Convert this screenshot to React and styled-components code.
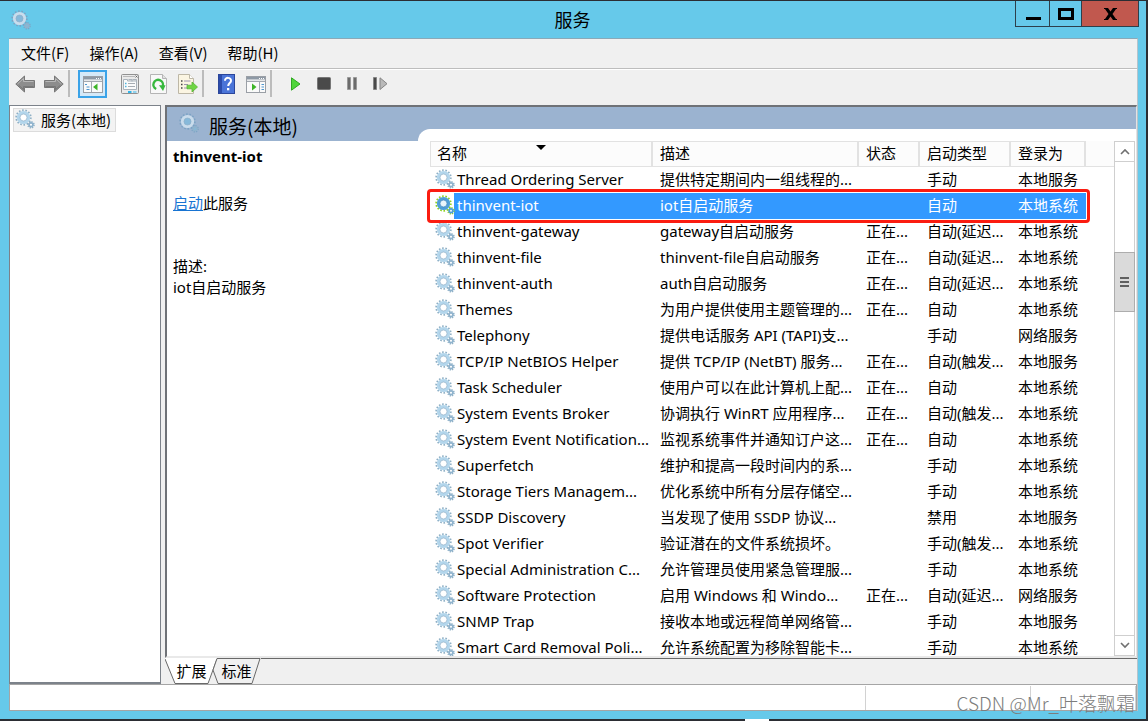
import React from "react";
import styled, { createGlobalStyle } from "styled-components";

function App() {
  // data
  const menus = ["文件(F)", "操作(A)", "查看(V)", "帮助(H)"];

  const columns = [
    { label: "名称", width: 223, sorted: true },
    { label: "描述", width: 206 },
    { label: "状态", width: 61 },
    { label: "启动类型", width: 91 },
    { label: "登录为", width: 75 },
  ];

  const services = [
    ["Thread Ordering Server", "提供特定期间内一组线程的...", "", "手动", "本地服务"],
    ["thinvent-iot", "iot自启动服务", "", "自动", "本地系统"],
    ["thinvent-gateway", "gateway自启动服务", "正在...", "自动(延迟...", "本地系统"],
    ["thinvent-file", "thinvent-file自启动服务", "正在...", "自动(延迟...", "本地系统"],
    ["thinvent-auth", "auth自启动服务", "正在...", "自动(延迟...", "本地系统"],
    ["Themes", "为用户提供使用主题管理的...", "正在...", "自动", "本地系统"],
    ["Telephony", "提供电话服务 API (TAPI)支...", "", "手动", "网络服务"],
    ["TCP/IP NetBIOS Helper", "提供 TCP/IP (NetBT) 服务...", "正在...", "自动(触发...", "本地服务"],
    ["Task Scheduler", "使用户可以在此计算机上配...", "正在...", "自动", "本地系统"],
    ["System Events Broker", "协调执行 WinRT 应用程序...", "正在...", "自动(触发...", "本地系统"],
    ["System Event Notification...", "监视系统事件并通知订户这...", "正在...", "自动", "本地系统"],
    ["Superfetch", "维护和提高一段时间内的系...", "", "手动", "本地系统"],
    ["Storage Tiers Managem...", "优化系统中所有分层存储空...", "", "手动", "本地系统"],
    ["SSDP Discovery", "当发现了使用 SSDP 协议...", "", "禁用", "本地服务"],
    ["Spot Verifier", "验证潜在的文件系统损坏。", "", "手动(触发...", "本地系统"],
    ["Special Administration C...", "允许管理员使用紧急管理服...", "", "手动", "本地系统"],
    ["Software Protection", "启用 Windows 和 Windo...", "正在...", "自动(延迟...", "网络服务"],
    ["SNMP Trap", "接收本地或远程简单网络管...", "", "手动", "本地服务"],
    ["Smart Card Removal Poli...", "允许系统配置为移除智能卡...", "", "手动", "本地系统"],
  ];
  const selectedName = "thinvent-iot";

  // render items
  const menusJSX = menus.map((menu) => <MenuButton key={menu}>{menu}</MenuButton>);

  const headersJSX = columns.map((column) => (
    <HeaderCell key={column.label} scope="col">
      {column.label}
      {column.sorted && (
        <SortArrow viewBox="0 0 10 5" aria-hidden="true">
          <path d="M0 0h10L5 5z" />
        </SortArrow>
      )}
    </HeaderCell>
  ));

  const servicesJSX = services.map(([name, description, status, startup, logon]) => {
    const selected = name === selectedName;
    return (
      <ServiceRow key={name} $selected={selected}>
        <NameCell $selected={selected}>
          <NameContent>
            <GearIcon active={selected} />
            <span>{name}</span>
          </NameContent>
          {selected && <Highlight />}
        </NameCell>
        <Cell>{description}</Cell>
        <Cell>{status}</Cell>
        <Cell>{startup}</Cell>
        <Cell>{logon}</Cell>
      </ServiceRow>
    );
  });

  return (
    <Desktop>
      <GlobalStyle />
      <Window>
        <TitleBar>
          <GearIcon pale />
          <Title>服务</Title>
          <WindowControls>
            <WindowButton aria-label="最小化" $width={33}>
              <svg width="16" height="16" viewBox="0 0 16 16">
                <path d="M1 11h15v3H1z" />
              </svg>
            </WindowButton>
            <WindowButton aria-label="最大化" $width={32}>
              <svg width="16" height="12" viewBox="0 0 16 12">
                <path d="M0 0h16v12H0zM3 3v6h10V3z" fillRule="evenodd" />
              </svg>
            </WindowButton>
            <WindowButton aria-label="关闭" $width={57} $close>
              <svg width="13" height="12" viewBox="0 0 13 12">
                <path d="M0 0h4l2.5 3.5L9 0h4v1h-1L8.5 6l3.5 5h1v1H9L6.5 8.5 4 12H0v-1h1l3.5-5L1 1H0z" />
              </svg>
            </WindowButton>
          </WindowControls>
        </TitleBar>
        <Client>
          <MenuBar>{menusJSX}</MenuBar>
          <ToolBar>
            <ToolButton aria-label="后退">
              <ArrowIcon />
            </ToolButton>
            <ToolButton aria-label="前进">
              <ArrowIcon flip />
            </ToolButton>
            <Separator />
            <ToolButton aria-label="显示/隐藏控制台树" $active>
              <PanelIcon />
            </ToolButton>
            <ToolButton aria-label="属性">
              <PropertiesIcon />
            </ToolButton>
            <ToolButton aria-label="刷新">
              <RefreshIcon />
            </ToolButton>
            <ToolButton aria-label="导出列表">
              <ExportIcon />
            </ToolButton>
            <Separator />
            <ToolButton aria-label="帮助">
              <HelpIcon />
            </ToolButton>
            <ToolButton aria-label="显示/隐藏操作窗格">
              <PanelIcon right />
            </ToolButton>
            <Separator $wide />
            <ToolButton aria-label="启动服务" $narrow>
              <svg width="10" height="14" viewBox="0 0 10 14">
                <path d="M.5.8v12.4L9 7z" fill="#4fd53a" stroke="#2fa822" />
              </svg>
            </ToolButton>
            <ToolButton aria-label="停止服务" $narrow>
              <svg width="14" height="14" viewBox="0 0 14 14">
                <rect x=".5" y=".5" width="13" height="12" rx="1" fill="#4a4a4a" stroke="#777" />
              </svg>
            </ToolButton>
            <ToolButton aria-label="暂停服务" $narrow>
              <svg width="12" height="14" viewBox="0 0 12 14">
                <path d="M1.5.5h3v12h-3zM7.500.5h3v12h-3z" fill="#6b6b6b" stroke="#999" />
              </svg>
            </ToolButton>
            <ToolButton aria-label="重新启动服务" $narrow>
              <svg width="16" height="14" viewBox="0 0 16 14">
                <path d="M1.5.5h3v12h-3z" fill="#4a4a4a" stroke="#858585" />
                <path d="M8 .8v11.700L15 6.700z" fill="#b9b9b9" stroke="#858585" />
              </svg>
            </ToolButton>
          </ToolBar>
          <Panes>
            <TreePane>
              <TreeItem>
                <GearIcon />
                服务(本地)
              </TreeItem>
            </TreePane>
            <ContentPane>
              <ContentBody>
                <Details>
                  <Banner>
                    <GearIcon pale />
                    服务(本地)
                  </Banner>
                  <ServiceName>thinvent-iot</ServiceName>
                  <DetailLine>
                    <StartLink href="#start">启动</StartLink>此服务
                  </DetailLine>
                  <Description>
                    描述:
                    <br />
                    iot自启动服务
                  </Description>
                </Details>
                <ListSide>
                  <ListSurface>
                    <TableArea>
                      <ServiceTable>
                        <colgroup>
                          {columns.map((column) => (
                            <Column key={column.label} $width={column.width} />
                          ))}
                        </colgroup>
                        <thead>
                          <tr>{headersJSX}</tr>
                        </thead>
                        <tbody>{servicesJSX}</tbody>
                      </ServiceTable>
                      <HeaderRest />
                    </TableArea>
                    <ScrollBar>
                      <ScrollButton aria-label="向上滚动">
                        <Chevron />
                      </ScrollButton>
                      <ScrollTrack $grow={90} />
                      <ScrollThumb>
                        <svg width="9" height="10" viewBox="0 0 9 10" aria-hidden="true">
                          <path d="M0 0h9v2H0zM0 4h9v2H0zM0 8h9v2H0z" fill="#606060" />
                        </svg>
                      </ScrollThumb>
                      <ScrollTrack $grow={323} />
                      <ScrollButton aria-label="向下滚动">
                        <Chevron down />
                      </ScrollButton>
                    </ScrollBar>
                  </ListSurface>
                </ListSide>
              </ContentBody>
              <Tabs>
                <Tab $width={53}>
                  <TabShape viewBox="0 0 53 26" aria-hidden="true">
                    <path d="M0 0l10 25h33L53 0z" fill="#fff" />
                    <path d="M0 1l10 24.500h33L52 1" fill="none" stroke="#696969" />
                  </TabShape>
                  <TabLabel>扩展</TabLabel>
                </Tab>
                <Tab $width={49} $overlap>
                  <TabShape viewBox="0 0 49 26" aria-hidden="true">
                    <path d="M5 .5L1 12l5 13.500h34L48 .5z" fill="#f0f0f0" stroke="#696969" />
                  </TabShape>
                  <TabLabel>标准</TabLabel>
                </Tab>
                <TabRest />
              </Tabs>
            </ContentPane>
          </Panes>
          <StatusBar>
            <StatusCell $grow />
            <StatusCell $width={165} />
            <StatusCell $width={105} />
          </StatusBar>
        </Client>
        <Watermark>CSDN @Mr_叶落飘霜</Watermark>
      </Window>
      <DesktopEdge />
    </Desktop>
  );
}

export default App;

// icons
function GearIcon({ active, pale }) {
  const teeth = active ? "#8ed321" : pale ? "#7ba3c4" : "#8fb0c6";
  const body = active ? "#4f9fd8" : pale ? "#c9dcec" : "#b3d6ec";
  const edge = active ? "#3c83bd" : "#8fb0c8";
  const hole = active ? "#eaf5fb" : pale ? "#86b9da" : "#fff";
  return (
    <svg width="20" height="20" viewBox="0 0 20 20" aria-hidden="true">
      <circle cx="8.5" cy="8.500" r="7.300" fill="none" stroke={teeth} strokeWidth="1.800" strokeDasharray="1.600 1.676" />
      <circle cx="8.5" cy="8.500" r="5.100" fill={hole} stroke={body} strokeWidth="3" />
      <circle cx="8.5" cy="8.500" r="3.500" fill="none" stroke={edge} strokeWidth=".7" />
      <circle cx="16" cy="15.800" r="3" fill="none" stroke={teeth} strokeWidth="1.600" strokeDasharray="1.200 1.156" />
      <circle cx="16" cy="15.800" r="1.900" fill={hole} stroke={active ? "#4f9fd8" : "#8fb3cd"} strokeWidth="1.700" />
    </svg>
  );
}

function ArrowIcon({ flip }) {
  return (
    <svg width="20" height="18" viewBox="0 0 20 18" aria-hidden="true">
      <g transform={flip ? "translate(20 0) scale(-1 1)" : undefined}>
        <path d="M.8 9L9.500 1v4.500h10v7h-10V17z" fill="#8d8d8d" stroke="#777" strokeLinejoin="round" />
        <path d="M2.500 9l6-5.500v3h10" fill="none" stroke="#b8b8b8" />
        <path d="M4 10.500l4.500 4v-3h10" fill="none" stroke="#777" />
      </g>
    </svg>
  );
}

function PanelIcon({ right }) {
  return (
    <svg width="20" height="18" viewBox="0 0 20 18" aria-hidden="true">
      <rect x=".5" y="1.500" width="19" height="16" fill="#fafafa" stroke="#9a9fa6" />
      <path d="M1 2h18v2.500H1z" fill="#8e99a5" />
      <path d="M13 3h1v1h-1zM15 3h1v1h-1zM17 3h1v1h-1z" fill="#fff" />
      <path d="M1 5.500h18" stroke="#e6e8ea" />
      <path d="M1 6.500h18" stroke="#a3a9b1" />
      {right ? (
        <g>
          <path d="M13.500 7v10" stroke="#a3a9b1" />
          <path d="M15.500 9.500h2.500M15.500 12h2.500M15.500 14.500h2.500" stroke="#4f97d0" />
          <path d="M6 8.500v7l4.500-3.500z" fill="#3db528" />
        </g>
      ) : (
        <g>
          <path d="M8.500 7v10" stroke="#a3a9b1" />
          <path d="M2 9.500h2M3.500 12h3M3.500 14.500h3" stroke="#4f97d0" />
          <path d="M14.500 8.500v7L10 12z" fill="#3db528" />
        </g>
      )}
    </svg>
  );
}

function PropertiesIcon() {
  return (
    <svg width="20" height="20" viewBox="0 0 20 20" aria-hidden="true">
      <rect x="1.500" y=".5" width="17" height="19" rx="1" fill="#eaeaea" stroke="#919191" />
      <path d="M3 2.500h12" stroke="#b9b9b9" />
      <path d="M15.500 1.500l2 2m0-2l-2 2" stroke="#555" strokeWidth=".8" />
      <path d="M3.500 5.500h4v1.500h9V15.500h-13z" fill="#fbfbfb" stroke="#aab3bb" />
      <path d="M8.500 5.500h3.500v2M12.500 5.500h4v2" fill="none" stroke="#aab3bb" />
      <path d="M5 9.500h1.500M5 12.500h1.500" stroke="#4fb4de" strokeWidth="1.500" />
      <path d="M8 9.500h7M8 12.500h7" stroke="#a7adb3" />
      <path d="M8 17h3.500v2H8z" fill="#2fb5ea" />
      <path d="M13 17h3.500v2H13z" fill="#8fd2ee" />
    </svg>
  );
}

function RefreshIcon() {
  return (
    <svg width="17" height="20" viewBox="0 0 17 20" aria-hidden="true">
      <path d="M.5.5h12l4 4v15H.5z" fill="#f8f8f8" stroke="#b4b4b4" />
      <path d="M12.500.5v4h4" fill="#e2e2e2" stroke="#b4b4b4" />
      <path d="M6.200 15A4.800 4.800 0 1 1 12.800 12" fill="none" stroke="#37b83d" strokeWidth="2.400" />
      <path d="M9 11.200h6.500L13 17z" fill="#37b83d" />
    </svg>
  );
}

function ExportIcon() {
  return (
    <svg width="20" height="20" viewBox="0 0 20 20" aria-hidden="true">
      <path d="M.5.5h11l4 4v15H.5z" fill="#fbf5e2" stroke="#bdb7a6" />
      <path d="M11.500.5v4h4" fill="#fff" stroke="#bdb7a6" />
      <path d="M3 7h1.500M3 10.500h1.500M3 14h1.500" stroke="#444" strokeWidth="1.400" />
      <path d="M6 7h6.500M6 10.500h4M6 14h4" stroke="#9d93ad" />
      <path d="M9 11.200h5V8l5.500 5-5.500 5v-3.200H9z" fill="#6fd543" stroke="#56b535" strokeWidth=".8" />
    </svg>
  );
}

function HelpIcon() {
  return (
    <svg width="17" height="20" viewBox="0 0 17 20" aria-hidden="true">
      <rect x=".5" y=".5" width="16" height="19" fill="#4a74d8" stroke="#2b469b" />
      <path d="M1 1h3v18H1z" fill="#2c4cab" />
      <path d="M7 6.800c0-4 6.300-3.800 6 0-.2 2.200-2.800 2.400-2.800 5.200" fill="none" stroke="#fff" strokeWidth="2" />
      <rect x="9" y="14" width="2.300" height="2.300" fill="#fff" />
    </svg>
  );
}

function Chevron({ down }) {
  return (
    <svg width="10" height="7" viewBox="0 0 10 7" aria-hidden="true">
      <path d={down ? "M1 1l4 4 4-4" : "M1 6l4-4 4 4"} fill="none" stroke="#707070" strokeWidth="1.600" />
    </svg>
  );
}

// styles
const GlobalStyle = createGlobalStyle`
  * {
    box-sizing: border-box;
  }
  body {
    margin: 0;
    color: #000;
    font-family: "Noto Sans", "Noto Sans CJK SC", sans-serif;
    font-size: 15px;
    line-height: 21px;
  }
  button {
    padding: 0;
    border: 0;
    background: none;
    color: inherit;
    font: inherit;
  }
  svg {
    flex: none;
  }
`;

const Desktop = styled.div`
  display: flex;
  flex-direction: column;
  height: 100vh;
  padding: 1px 2px 0 0;
  background: #2b2d33;
`;
const DesktopEdge = styled.div`
  width: 24px;
  height: 2px;
  margin-left: 65%;
  background: #fff;
`;

const Window = styled.div`
  position: relative;
  display: flex;
  flex: 1;
  flex-direction: column;
  min-height: 0;
  padding: 0 8px 8px 9px;
  background: #66c9ea;
`;

const TitleBar = styled.header`
  position: relative;
  display: flex;
  align-items: center;
  height: 37px;
  padding-left: 2px;
`;
const Title = styled.h1`
  flex: 1;
  margin: 0;
  padding-right: 24px;
  font-family: "Noto Sans CJK SC", sans-serif;
  font-size: 18px;
  font-weight: 400;
  text-align: center;
`;
const WindowControls = styled.div`
  position: absolute;
  top: 0;
  right: -1px;
  display: flex;
  border: 1px solid #2d3f4b;
  border-top: 0;
`;
const WindowButton = styled.button`
  display: flex;
  align-items: center;
  justify-content: center;
  width: ${(props) => props.$width}px;
  height: 25px;
  background: ${(props) => (props.$close ? "#c1584e" : "transparent")};

  & + & {
    border-left: 1px solid #2d3f4b;
  }
`;

const Client = styled.div`
  display: flex;
  flex: 1;
  flex-direction: column;
  min-height: 0;
  border-top: 1px solid #8aa9b8;
  border-right: 1px solid #b5c4cc;
  background: #f0f0f0;
`;
const MenuBar = styled.nav`
  display: flex;
  flex: none;
  height: 30px;
  padding: 0 2px 2px;
  border-bottom: 1px solid #bdbdbd;
  font-family: "Noto Sans CJK SC", sans-serif;
`;
const MenuButton = styled.button`
  padding: 0 10px;
`;

const ToolBar = styled.div`
  display: flex;
  flex: none;
  align-items: center;
  height: 36px;
  padding: 0 1px 8px;
  border-top: 1px solid #fff;
`;
const ToolButton = styled.button`
  display: flex;
  align-items: center;
  justify-content: center;
  width: ${(props) => (props.$narrow ? 28 : 29)}px;
  height: 28px;
  margin-right: ${(props) => (props.$active ? 8 : 0)}px;
  border: ${(props) => (props.$active ? "2px solid #3ba3e8" : "0")};
  background: ${(props) => (props.$active ? "#d5e9f8" : "none")};
`;
const Separator = styled.div`
  width: 2px;
  height: 27px;
  margin-right: ${(props) => (props.$wide ? 10 : 8)}px;
  background: #bcbcbc;
`;

const Panes = styled.div`
  display: flex;
  flex: 1;
  gap: 4px;
  min-height: 0;
`;
const TreePane = styled.aside`
  width: 152px;
  padding: 2px 3px;
  border: 1px solid #7c828a;
  border-bottom-width: 2px;
  background: #fff;
`;
const TreeItem = styled.button`
  display: flex;
  align-items: center;
  gap: 6px;
  height: 24px;
  padding: 0 4px 2px 1px;
  border: 1px solid #dcdcdc;
  background: #f3f3f3;
  font-family: "Noto Sans CJK SC", sans-serif;
  white-space: nowrap;
`;

const ContentPane = styled.main`
  display: flex;
  flex: 1;
  flex-direction: column;
  min-width: 0;
`;
const ContentBody = styled.div`
  display: flex;
  flex: 1;
  min-height: 0;
  border: 2px solid #6f7277;
  border-right: 1px solid #e3e3e3;
  border-bottom: 2px solid #e9e9e9;
  background: #fff;
`;
const Details = styled.section`
  width: 251px;
`;
const Banner = styled.h2`
  display: flex;
  align-items: center;
  gap: 10px;
  height: 34px;
  margin: 0;
  padding: 2px 12px 0;
  background: #9bb3d0;
  font-family: "Noto Sans CJK SC", sans-serif;
  font-size: 19px;
  font-weight: 400;

  svg {
    margin-bottom: 4px;
  }
`;
const ServiceName = styled.h3`
  margin: 5px 6px 26px;
  font-size: 15px;
  font-weight: 700;
`;
const DetailLine = styled.p`
  margin: 0 6px 42px;
`;
const Description = styled.p`
  margin: 0 6px;
`;
const StartLink = styled.a`
  color: #1874d2;
`;

const ListSide = styled.section`
  display: flex;
  flex: 1;
  min-width: 0;
  padding-top: 22px;
  background: linear-gradient(#9bb3d0 34px, #fff 34px);
`;
const ListSurface = styled.div`
  display: flex;
  flex: 1;
  min-width: 0;
  padding: 12px 1px 0 0;
  overflow: hidden;
  border-top-left-radius: 12px;
  background: #fff;
`;
const TableArea = styled.div`
  display: flex;
  flex: 1;
  align-items: flex-start;
  min-width: 0;
  padding-left: 12px;
  overflow: hidden;
`;
const ServiceTable = styled.table`
  flex: none;
  width: 656px;
  border-spacing: 0;
  table-layout: fixed;
`;
const Column = styled.col`
  width: ${(props) => props.$width}px;
`;
const HeaderCell = styled.th`
  position: relative;
  height: 26px;
  padding: 0 7px 2px;
  border: 1px solid #e2e2e2;
  border-width: 1px 2px 1px 0;
  background: #fcfcfc;
  font-weight: 400;
  text-align: left;
  white-space: nowrap;

  &:first-child {
    padding-left: 6px;
    border-left-width: 1px;
  }
`;
const SortArrow = styled.svg`
  position: absolute;
  top: 3px;
  left: calc(50% - 5px);
  width: 10px;
  height: 5px;
`;
const HeaderRest = styled.div`
  flex: 1;
  height: 26px;
  border-bottom: 1px solid #e2e2e2;
  background: #fcfcfc;
`;
const ServiceRow = styled.tr`
  position: relative;
  background: ${(props) => (props.$selected ? "#3399ff" : "transparent")};
  color: ${(props) => (props.$selected ? "#fff" : "#000")};
`;
const Cell = styled.td`
  height: 26px;
  padding: 0 0 2px 7px;
  overflow: hidden;
  white-space: nowrap;
`;
const NameCell = styled(Cell)`
  padding-left: 5px;
  background: ${(props) =>
    props.$selected ? "linear-gradient(to right, #fff 24px, #3399ff 24px)" : "none"};
`;
const NameContent = styled.div`
  display: flex;
  align-items: center;
  gap: 2px;
`;
const Highlight = styled.div`
  position: absolute;
  inset: -4px -4px -4px -3px;
  z-index: 1;
  border: 3px solid #fb1c10;
  border-radius: 4px;
`;

const ScrollBar = styled.div`
  display: flex;
  flex: none;
  flex-direction: column;
  width: 21px;
  border: 1px solid #cfcfcf;
  background: #fff;
`;
const ScrollButton = styled.button`
  display: flex;
  align-items: center;
  justify-content: center;
  height: 20px;
  border: 0 solid #cfcfcf;

  &:first-child {
    border-bottom-width: 1px;
  }
  &:last-child {
    border-top-width: 1px;
  }
`;
const ScrollTrack = styled.div`
  flex: ${(props) => props.$grow};
`;
const ScrollThumb = styled.div`
  display: flex;
  align-items: center;
  justify-content: center;
  height: 60px;
  margin: 0 -1px;
  border: 1px solid #adadad;
  background: #dadada;
`;

const Tabs = styled.div`
  display: flex;
  flex: none;
  height: 26px;
`;
const Tab = styled.button`
  position: relative;
  width: ${(props) => props.$width}px;
  margin-left: ${(props) => (props.$overlap ? -6 : 0)}px;
`;
const TabShape = styled.svg`
  position: absolute;
  inset: 0;
  width: 100%;
  height: 100%;
`;
const TabLabel = styled.span`
  position: relative;
`;
const TabRest = styled.div`
  flex: 1;
  border-top: 1px solid #696969;
`;

const StatusBar = styled.footer`
  display: flex;
  flex: none;
  height: 27px;
  padding-top: 1px;
  border: 1px solid #a5a5a5;
  background: #fff;
`;
const StatusCell = styled.div`
  flex: ${(props) => (props.$grow ? 1 : "none")};
  width: ${(props) => props.$width || 0}px;
  border-right: 1px solid #d2d2d2;
`;

const Watermark = styled.div`
  position: absolute;
  right: 11px;
  bottom: 4px;
  color: #7d7d7d;
  font-family: "Noto Sans CJK SC", sans-serif;
  font-size: 19px;
  font-weight: 300;
  line-height: 24px;
`;
